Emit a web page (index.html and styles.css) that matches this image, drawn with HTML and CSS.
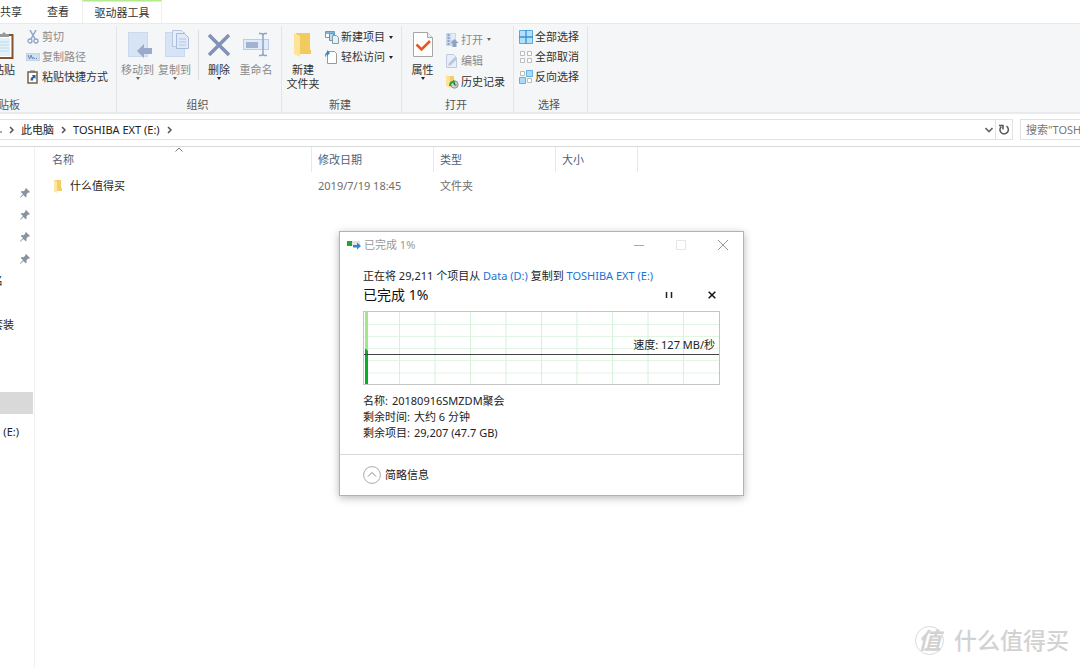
FILE: index.html
```html
<!DOCTYPE html>
<html lang="zh-CN">
<head>
<meta charset="utf-8">
<title>TOSHIBA EXT (E:)</title>
<link rel="stylesheet" href="styles.css">
</head>
<body>
<div class="explorer">
  <nav class="tabs">
    <button class="tab tab-share">共享</button>
    <button class="tab tab-view">查看</button>
    <button class="tab tab-active">驱动器工具</button>
  </nav>

  <div class="ribbon">
    <section class="group group-clipboard">
      <div class="group-body">
        <button class="big big-paste">
          <svg class="big-icon" width="28" height="30" viewBox="0 0 28 30"><rect x="1.500" y="5" width="24" height="23" fill="#fff" stroke="#80552f" stroke-width="2"/><rect x="4" y="8" width="19" height="18" fill="#e4f1f8"/><path d="M5 12h17M5 15h17M5 18h17M5 21h17" stroke="#bcdcec"/><path d="M12 7V4h3l2-2 2 2h3v3z" fill="#999"/></svg>
          <span>粘贴</span>
        </button>
        <div class="smalls">
          <button class="small off"><svg width="14" height="14" viewBox="0 0 14 14"><path d="M4 0l5 9M10 0L5 9" stroke="#8fa6c6" stroke-width="1.500" fill="none"/><circle cx="4" cy="11" r="2" fill="none" stroke="#8fa6c6" stroke-width="1.300"/><circle cx="10" cy="11" r="2" fill="none" stroke="#8fa6c6" stroke-width="1.300"/></svg>剪切</button>
          <button class="small off"><svg width="14" height="14" viewBox="0 0 14 14"><rect x="0.500" y="3.500" width="13" height="7" fill="#cfdff2" stroke="#c3d3e8"/><path d="M2 5l1.500 4L5 5l1.500 4 1-2" stroke="#6c84ad" fill="none"/><path d="M8 8.500h4" stroke="#6c84ad" stroke-dasharray="1 1"/></svg>复制路径</button>
          <button class="small"><svg width="14" height="14" viewBox="0 0 14 14"><rect x="2" y="2" width="9" height="11" fill="#fff" stroke="#79604a" stroke-width="1.500"/><path d="M4 0.500h5v2H4z" fill="#777"/><path d="M4.500 10.500c0-2.500 1-3.500 2.500-4L6 5h3.500v4L8.300 7.800c-1 .4-1.300 1.200-1.300 2.700z" fill="#1f5fb0"/></svg>粘贴快捷方式</button>
        </div>
      </div>
      <h2 class="group-name">剪贴板</h2>
    </section>

    <section class="group group-organize">
      <div class="group-body">
        <button class="big off">
          <svg class="big-icon" width="28" height="30" viewBox="0 0 28 30"><rect x="4.500" y="2.500" width="19" height="24" fill="#d7e4f5" stroke="#cbd9ee"/><path d="M13 21l7-7v4h8v6h-8v4z" fill="#9aaac9"/></svg>
          <span>移动到</span><i class="caret"></i>
        </button>
        <button class="big off">
          <svg class="big-icon" width="28" height="30" viewBox="0 0 28 30"><rect x="4.500" y="2.500" width="19" height="24" fill="#d7e4f5" stroke="#cbd9ee"/><path d="M11.500.500h9l3 3v13h-12z" fill="#e6eefa" stroke="#b6c6e0"/><path d="M15.500 3.500h8l4 4v11h-12z" fill="#dfe9f8" stroke="#aabcdb"/><path d="M18 9h7M18 12h7M18 15h7" stroke="#b6c6e0"/></svg>
          <span>复制到</span><i class="caret"></i>
        </button>
        <div class="rule"></div>
        <button class="big big-delete">
          <svg class="big-icon" width="28" height="30" viewBox="0 0 28 30"><path d="M4 5l20 20M24 5L4 25" stroke="#8092b7" stroke-width="3.500"/></svg>
          <span>删除</span><i class="caret"></i>
        </button>
        <button class="big big-rename off">
          <svg class="big-icon" width="28" height="30" viewBox="0 0 28 30"><rect x="1.500" y="9.500" width="25" height="10" fill="#dfeafb" stroke="#b9cce9"/><rect x="4" y="12" width="12" height="6" fill="#a2b3d2"/><path d="M17 3.500h2q2 0 2 2v18q0 2-2 2h-2M25 3.500h-2q-2 0-2 2v18q0 2 2 2h2" fill="none" stroke="#8fa2c4" stroke-width="1.500"/></svg>
          <span>重命名</span>
        </button>
      </div>
      <h2 class="group-name">组织</h2>
    </section>

    <section class="group group-new">
      <div class="group-body">
        <button class="big big-folder">
          <svg class="big-icon" width="28" height="30" viewBox="0 0 28 30"><path d="M7 3h14v17h1v4H8z" fill="#f3ca5d"/><path d="M5 3l6 3v21l-6-3z" fill="#ffe497"/></svg>
          <span>新建<br>文件夹</span>
        </button>
        <div class="smalls">
          <button class="small"><svg width="14" height="14" viewBox="0 0 14 14"><path d="M.500 1.500h9v6h-9z" fill="#fff" stroke="#5f9fc0"/><path d="M1 2h8v2H1z" fill="#7fb5d2"/><path d="M4.500 3.500h4v7h-4z" fill="#b9dcee" stroke="#7890a0"/><path d="M7.500 5.500h4l2 2v6h-6z" fill="#e5f1f8" stroke="#8a9aa5"/></svg>新建项目<i class="caret"></i></button>
          <button class="small"><svg width="14" height="14" viewBox="0 0 14 14"><path d="M2.500 1.500h7l2 2v10h-9z" fill="#fff" stroke="#999"/><path d="M0 6q0-3 2-4V0l3 3-3 3V4Q1 5 1 7z" fill="#3c87ba"/></svg>轻松访问<i class="caret"></i></button>
        </div>
      </div>
      <h2 class="group-name">新建</h2>
    </section>

    <section class="group group-open">
      <div class="group-body">
        <button class="big big-props">
          <svg class="big-icon" width="28" height="30" viewBox="0 0 28 30"><path d="M4.500 2.500h14l5 5v19h-19z" fill="#fff" stroke="#a5a5a5"/><path d="M18.500 2.500v5h5" fill="#eee" stroke="#a5a5a5"/><path d="M7.500 14.500l5 5L21 11" fill="none" stroke="#f0541e" stroke-width="2.500"/></svg>
          <span>属性</span><i class="caret"></i>
        </button>
        <div class="smalls">
          <button class="small off"><svg width="14" height="14" viewBox="0 0 14 14"><path d="M1 0h10v13H1z" fill="#cbd8eb"/><path d="M3.500 1v11" stroke="#8da2c5" stroke-width="2" stroke-dasharray="2 1"/><path d="M6 1h4v6H6z" fill="#e3ebf7"/><path d="M9.500 6l4 4h-2v4h-4v-4h-2z" fill="#8fa2c4"/></svg>打开<i class="caret"></i></button>
          <button class="small off"><svg width="14" height="14" viewBox="0 0 14 14"><path d="M1.500.500h7l3 3v10h-10z" fill="#e7effa" stroke="#bdcbe0"/><path d="M3 12l1-3 6-6 2 2-6 6z" fill="#b6c7df"/></svg>编辑</button>
          <button class="small"><svg width="14" height="14" viewBox="0 0 14 14"><path d="M2 1h7v11H3z" fill="#f3cf6c"/><path d="M1 0l4 2v11l-4-2z" fill="#ffe294"/><circle cx="9.500" cy="9.500" r="3.700" fill="#c8d0d0" stroke="#8b9696"/><path d="M9.500 7.500v2.500h2" fill="none" stroke="#555"/><path d="M4 11q0-5 4-5V4.500L10.500 7 8 9.500V8Q6 8 6 11z" fill="#2ba341"/></svg>历史记录</button>
        </div>
      </div>
      <h2 class="group-name">打开</h2>
    </section>

    <section class="group group-select">
      <div class="group-body">
        <div class="smalls">
          <button class="small"><svg width="14" height="14" viewBox="0 0 14 14"><path d="M.500.500h13v13H.500z" fill="#b4e0fb" stroke="#5aa9dc"/><path d="M7 0v14M0 7h14" stroke="#3791cf" stroke-width="1.300"/></svg>全部选择</button>
          <button class="small"><svg width="14" height="14" viewBox="0 0 14 14"><path d="M1.500 1.500h4v4h-4zM8.500 1.500h4v4h-4zM1.500 8.500h4v4h-4zM8.500 8.500h4v4h-4z" fill="#fff" stroke="#bbb"/></svg>全部取消</button>
          <button class="small"><svg width="14" height="14" viewBox="0 0 14 14"><path d="M1.500 1.500h4v4h-4zM8.500 8.500h4v4h-4z" fill="#fff" stroke="#bbb"/><path d="M7.500.500h6v6h-6zM.500 7.500h6v6h-6z" fill="#a9dbfa" stroke="#66b0df"/></svg>反向选择</button>
        </div>
      </div>
      <h2 class="group-name">选择</h2>
    </section>
  </div>

  <div class="address-row">
    <div class="address">
      <svg class="drive-icon" width="2" height="8" viewBox="0 0 2 8"><path d="M0 5h2v2H0z" fill="#aaa"/></svg>
      <svg class="crumb-arrow" width="6" height="8" viewBox="0 0 6 8"><path d="M1 1l3 3-3 3" fill="none" stroke="#555" stroke-width="1.500"/></svg>
      <a href="#pc">此电脑</a>
      <svg class="crumb-arrow" width="6" height="8" viewBox="0 0 6 8"><path d="M1 1l3 3-3 3" fill="none" stroke="#555" stroke-width="1.500"/></svg>
      <a href="#drive">TOSHIBA EXT (E:)</a>
      <svg class="crumb-arrow" width="6" height="8" viewBox="0 0 6 8"><path d="M1 1l3 3-3 3" fill="none" stroke="#555" stroke-width="1.500"/></svg>
      <button class="history" aria-label="以前的位置"><svg width="8" height="6" viewBox="0 0 8 6"><path d="M.500 1L4 4.500 7.500 1" fill="none" stroke="#666" stroke-width="1.600"/></svg></button>
      <button class="refresh" aria-label="刷新"><svg width="12" height="12" viewBox="0 0 12 12"><path d="M8.500 2.200A4.200 4.200 0 1 1 3.300 2.600" fill="none" stroke="#555" stroke-width="1.500"/><path d="M1 1.500h4v4" fill="none" stroke="#555" stroke-width="1.500"/></svg></button>
    </div>
    <input class="search" type="text" aria-label="搜索" placeholder="搜索&quot;TOSHIBA EXT (E:)&quot;">
  </div>

  <div class="workspace">
    <ul class="sidebar">
      <li><svg class="pin" width="10" height="10" viewBox="0 0 10 10"><path d="M6 0l4 4-1 .8-.8-.2-1.700 1.700.2 2-1 .9L3.400 7 .5 9.700 0 9.500l.3-.6L3 6 .8 4l.9-.9 2 .2 1.700-1.700L5.200.8z" fill="#8793a0"/></svg></li>
      <li><svg class="pin" width="10" height="10" viewBox="0 0 10 10"><path d="M6 0l4 4-1 .8-.8-.2-1.700 1.700.2 2-1 .9L3.400 7 .5 9.700 0 9.500l.3-.6L3 6 .8 4l.9-.9 2 .2 1.700-1.700L5.200.8z" fill="#8793a0"/></svg></li>
      <li><svg class="pin" width="10" height="10" viewBox="0 0 10 10"><path d="M6 0l4 4-1 .8-.8-.2-1.700 1.700.2 2-1 .9L3.400 7 .5 9.700 0 9.500l.3-.6L3 6 .8 4l.9-.9 2 .2 1.700-1.700L5.200.8z" fill="#8793a0"/></svg></li>
      <li><svg class="pin" width="10" height="10" viewBox="0 0 10 10"><path d="M6 0l4 4-1 .8-.8-.2-1.700 1.700.2 2-1 .9L3.400 7 .5 9.700 0 9.500l.3-.6L3 6 .8 4l.9-.9 2 .2 1.700-1.700L5.200.8z" fill="#8793a0"/></svg></li>
      <li class="item-name">名</li>
      <li></li>
      <li class="item-suite">套装</li>
      <li class="item-selected"></li>
      <li class="item-drive">(E:)</li>
    </ul>

    <main class="files">
      <table class="list">
        <colgroup><col class="col-name"><col class="col-date"><col class="col-type"><col class="col-size"><col></colgroup>
        <thead>
          <tr>
            <th><div class="head">名称<svg class="sort" width="8" height="5" viewBox="0 0 8 5"><path d="M.500 4.500L4 1l3.500 3.500" fill="none" stroke="#777"/></svg></div></th>
            <th><div class="head">修改日期</div></th>
            <th><div class="head">类型</div></th>
            <th><div class="head">大小</div></th>
            <td></td>
          </tr>
        </thead>
        <tbody>
          <tr>
            <td class="cell-name"><div class="file"><svg width="10" height="13" viewBox="0 0 10 13"><path d="M1 0h7v8h1v3H2z" fill="#f3cd68"/><path d="M1 0l3 1.500V13l-3-1.500z" fill="#ffe7a3"/></svg>什么值得买</div></td>
            <td>2019/7/19 18:45</td>
            <td>文件夹</td>
            <td></td>
            <td></td>
          </tr>
        </tbody>
      </table>
    </main>
  </div>

  <div class="dialog" role="dialog" aria-label="已完成 1%">
    <header class="dialog-bar">
      <svg width="14" height="10" viewBox="0 0 14 10"><path d="M0 1h13v5H0z" fill="#e3e3e3"/><path d="M0 1h5v5H0z" fill="#21a336"/><path d="M6 5h4V2.500L14 6l-4 3.500V7.500H6z" fill="#2f86d8"/></svg>
      <span class="dialog-title">已完成 1%</span>
      <button class="win" aria-label="最小化"><svg width="10" height="10" viewBox="0 0 10 10"><path d="M0 5.500h10" stroke="#aaa"/></svg></button>
      <button class="win" aria-label="最大化" disabled><svg width="10" height="10" viewBox="0 0 10 10"><path d="M.500.500h9v9h-9z" fill="none" stroke="#e6e6e6"/></svg></button>
      <button class="win" aria-label="关闭"><svg width="10" height="10" viewBox="0 0 10 10"><path d="M0 0l10 10M10 0L0 10" stroke="#999"/></svg></button>
    </header>
    <div class="dialog-body">
      <p class="summary">正在将 29,211 个项目从 <a href="#d">Data (D:)</a> 复制到 <a href="#e">TOSHIBA EXT (E:)</a></p>
      <div class="progress">
        <strong>已完成 1%</strong>
        <button class="ctl" aria-label="暂停"><svg width="8" height="8" viewBox="0 0 8 8"><path d="M1.500 1v6M6.500 1v6" stroke="#222" stroke-width="1.500"/></svg></button>
        <button class="ctl" aria-label="取消"><svg width="8" height="8" viewBox="0 0 8 8"><path d="M.700.700l6.600 6.600M7.300.700L.700 7.300" stroke="#111" stroke-width="1.500"/></svg></button>
      </div>
      <div class="chart">
        <svg class="plot" viewBox="0 0 355 72" preserveAspectRatio="none">
          <path d="M0 12.500h355M0 24.500h355M0 36.500h355M0 48.500h355M0 61h355" stroke="#e2f5e4"/>
          <path d="M35.500 0v72M71 0v72M106.500 0v72M142 0v72M177.500 0v72M213 0v72M248.500 0v72M284 0v72M319.500 0v72" stroke="#d6f1da"/>
          <path d="M1 0h3v72H1z" fill="#a3e68f"/>
          <path d="M1 37h1l2 2v33H1z" fill="#06b025"/>
          <path d="M0 42.500h355" stroke="#444"/>
        </svg>
        <span class="speed">速度: 127 MB/秒</span>
      </div>
      <dl class="details">
        <div><dt>名称:</dt><dd>20180916SMZDM聚会</dd></div>
        <div><dt>剩余时间:</dt><dd>大约 6 分钟</dd></div>
        <div><dt>剩余项目:</dt><dd>29,207 (47.7 GB)</dd></div>
      </dl>
    </div>
    <footer class="dialog-foot">
      <button class="less"><svg width="18" height="18" viewBox="0 0 18 18"><circle cx="9" cy="9" r="8.400" fill="#fff" stroke="#aaa"/><path d="M5 10.500l4-4 4 4" fill="none" stroke="#888"/></svg>简略信息</button>
    </footer>
  </div>

  <div class="watermark">
    <span class="seal">值</span>
    <span>什么值得买</span>
  </div>
</div>
</body>
</html>
```

FILE: styles.css
```css
* { box-sizing: border-box; }

body {
  margin: 0;
  background: #fff;
  color: #222;
  font: 11px/14px "Noto Sans", "Noto Sans CJK SC", sans-serif;
}

button, input { font: inherit; color: inherit; }
button { border: 0; padding: 0; background: none; white-space: nowrap; }
a { text-decoration: none; color: inherit; }
h2, p, ul, dl, dd { margin: 0; padding: 0; }
svg { display: block; flex: none; }

.explorer {
  position: relative;
  display: flex;
  flex-direction: column;
  height: 100vh;
  overflow: hidden;
}

/* Tabs */
.tabs { display: flex; height: 24px; border-bottom: 1px solid #eaeaea; }
.tab { padding-top: 1px; color: #333; }
.tab-view { margin: 0 13px 0 25px; }
.tab-active {
  width: 80px;
  border: solid;
  border-width: 1px 1px 0;
  border-color: #b3ea90 #f0f0f0;
  box-shadow: inset 0 1px #d5f4c1;
}

/* Ribbon */
.ribbon {
  display: flex;
  height: 90px;
  background: #f5f6f7;
  border-bottom: 2px solid #e8eaec;
  padding-top: 2px;
}
.group {
  display: flex;
  flex-direction: column;
  justify-content: space-between;
  border-right: 1px solid #e4e5e7;
}
.group-body { display: flex; padding-top: 1px; }
.group-name {
  padding-right: 3px;
  font-size: 11px;
  line-height: 14px;
  font-weight: 400;
  color: #555;
  text-align: center;
}
.group-clipboard { width: 117px; }
.group-organize { width: 165px; }
.group-new { width: 120px; }
.group-open { width: 112px; }
.group-select { width: 74px; }
.group-organize .group-body { padding-left: 2px; }
.group-new .group-body { padding-left: 4px; }
.group-open .group-body { padding-left: 2px; }
.group-select .group-body { padding-left: 5px; }
.group-clipboard .group-name {
  display: flex;
  justify-content: flex-end;
  width: 20px;
  padding-right: 0;
  white-space: nowrap;
}

.big {
  display: flex;
  flex-direction: column;
  align-items: center;
  width: 37px;
  padding-top: 3px;
  color: #333;
}
.big-icon { margin-bottom: 3px; }
.big-paste { align-items: flex-end; width: 15px; }
.big-delete { width: 34px; }
.big-rename { margin-left: 1px; width: 38px; }
.big-folder { width: 34px; }
.off { color: #8a8a8a; }
.rule { width: 1px; margin: 3px 3px 0 5px; background: #dcdde0; }
.caret {
  border: 2px solid transparent;
  border-top: 3px solid #222;
  border-bottom: 0;
}
.off .caret { border-top-color: #666; }

.smalls { display: flex; flex-direction: column; padding-left: 5px; }
.small { display: flex; align-items: center; gap: 2px; height: 20px; color: #333; }
.small.off { color: #8a8a8a; }
.small .caret { margin-left: 2px; }
.group-clipboard .smalls { padding-left: 11px; }
.group-open .smalls { padding: 2px 0 0 4px; }
.group-open .small { height: 21px; }
.group-select .smalls { padding-left: 0; }

/* Address bar */
.address-row { display: flex; gap: 7px; padding: 5px 0 6px; border-bottom: 1px solid #d9d9d9; }
.address {
  flex: 1;
  display: flex;
  align-items: center;
  gap: 7px;
  height: 21px;
  border: 1px solid #e2e2e2;
  border-left: 0;
}
.crumb-arrow { margin-right: -1px; }
.history { margin-left: auto; }
.refresh {
  display: flex;
  align-items: center;
  justify-content: center;
  align-self: stretch;
  width: 17px;
  margin-left: -5px;
  border-left: 1px solid #e2e2e2;
}
.search {
  width: 60px;
  height: 21px;
  padding: 0 0 0 5px;
  border: 1px solid #e2e2e2;
  border-right: 0;
  border-radius: 0;
  background: #fff;
}
.search::placeholder { color: #777; opacity: 1; }

/* Navigation pane and file list */
.workspace { flex: 1; display: flex; min-height: 0; }
.sidebar {
  width: 35px;
  padding-top: 35px;
  border-right: 1px solid #f0f0f0;
  list-style: none;
  overflow: hidden;
}
.sidebar li {
  display: flex;
  align-items: center;
  justify-content: flex-end;
  height: 22px;
  padding-right: 4px;
  white-space: nowrap;
}
.sidebar .item-name { width: 3px; padding: 0; }
.sidebar .item-suite { width: 14px; padding: 0; }
.sidebar .item-selected { width: 33px; margin: 56px 0 7px; background: #d9d9d9; }
.sidebar .item-drive { width: 19px; padding: 0; }

.files { flex: 1; }
.list { width: 100%; table-layout: fixed; border-collapse: collapse; color: #6d6d6d; }
.col-name { width: 277px; }
.col-date, .col-type { width: 122px; }
.col-size { width: 82px; }
.list th { padding: 0 0 3px; font-weight: 400; text-align: left; color: #4c607a; }
.list td { height: 22px; padding: 0 0 0 6px; }
.list .cell-name { padding-left: 18px; color: #222; }
.head {
  position: relative;
  height: 25px;
  padding-left: 6px;
  line-height: 25px;
  border-right: 1px solid #e8e8e8;
}
th:first-child .head { padding-left: 17px; }
.sort { position: absolute; top: 0; left: 140px; }
.file { display: flex; align-items: center; gap: 7px; }

/* Copy window floating over the explorer */
.dialog {
  position: absolute;
  left: 339px;
  top: 231px;
  width: 405px;
  background: #fff;
  border: 1px solid #b2b2b2;
  box-shadow: 0 2px 8px rgba(0, 0, 0, .28);
}
.dialog-bar { display: flex; align-items: center; height: 26px; padding: 0 15px 0 7px; gap: 32px; }
.dialog-title { flex: 1; margin-left: -29px; color: #999; }
.dialog-body { padding: 10px 23px 13px; }
.summary { line-height: 16px; white-space: nowrap; }
.summary a { color: #1a73d1; }
.progress { display: flex; align-items: center; gap: 35px; height: 22px; padding-right: 4px; }
.progress strong { flex: 1; font-size: 14px; font-weight: 400; color: #111; }
.chart { position: relative; height: 74px; margin-top: 5px; border: 1px solid #c4c4c4; }
.plot { width: 100%; height: 100%; }
.speed { position: absolute; right: 4px; top: 26px; }
.details { margin-top: 8px; line-height: 16px; }
.details div { display: flex; gap: 4px; }
.dialog-foot { padding: 11px 23px; border-top: 1px solid #d9d9d9; }
.less { display: flex; align-items: center; gap: 4px; }

.watermark {
  position: absolute;
  right: 11px;
  bottom: 12px;
  display: flex;
  align-items: center;
  gap: 10px;
  font-size: 23px;
  line-height: 29px;
  font-weight: 500;
  color: #d2d2d2;
}
.seal {
  width: 29px;
  height: 29px;
  border: 1px solid #dadada;
  border-radius: 50%;
  font-style: italic;
  font-weight: 700;
  line-height: 26px;
  text-align: center;
}
```
